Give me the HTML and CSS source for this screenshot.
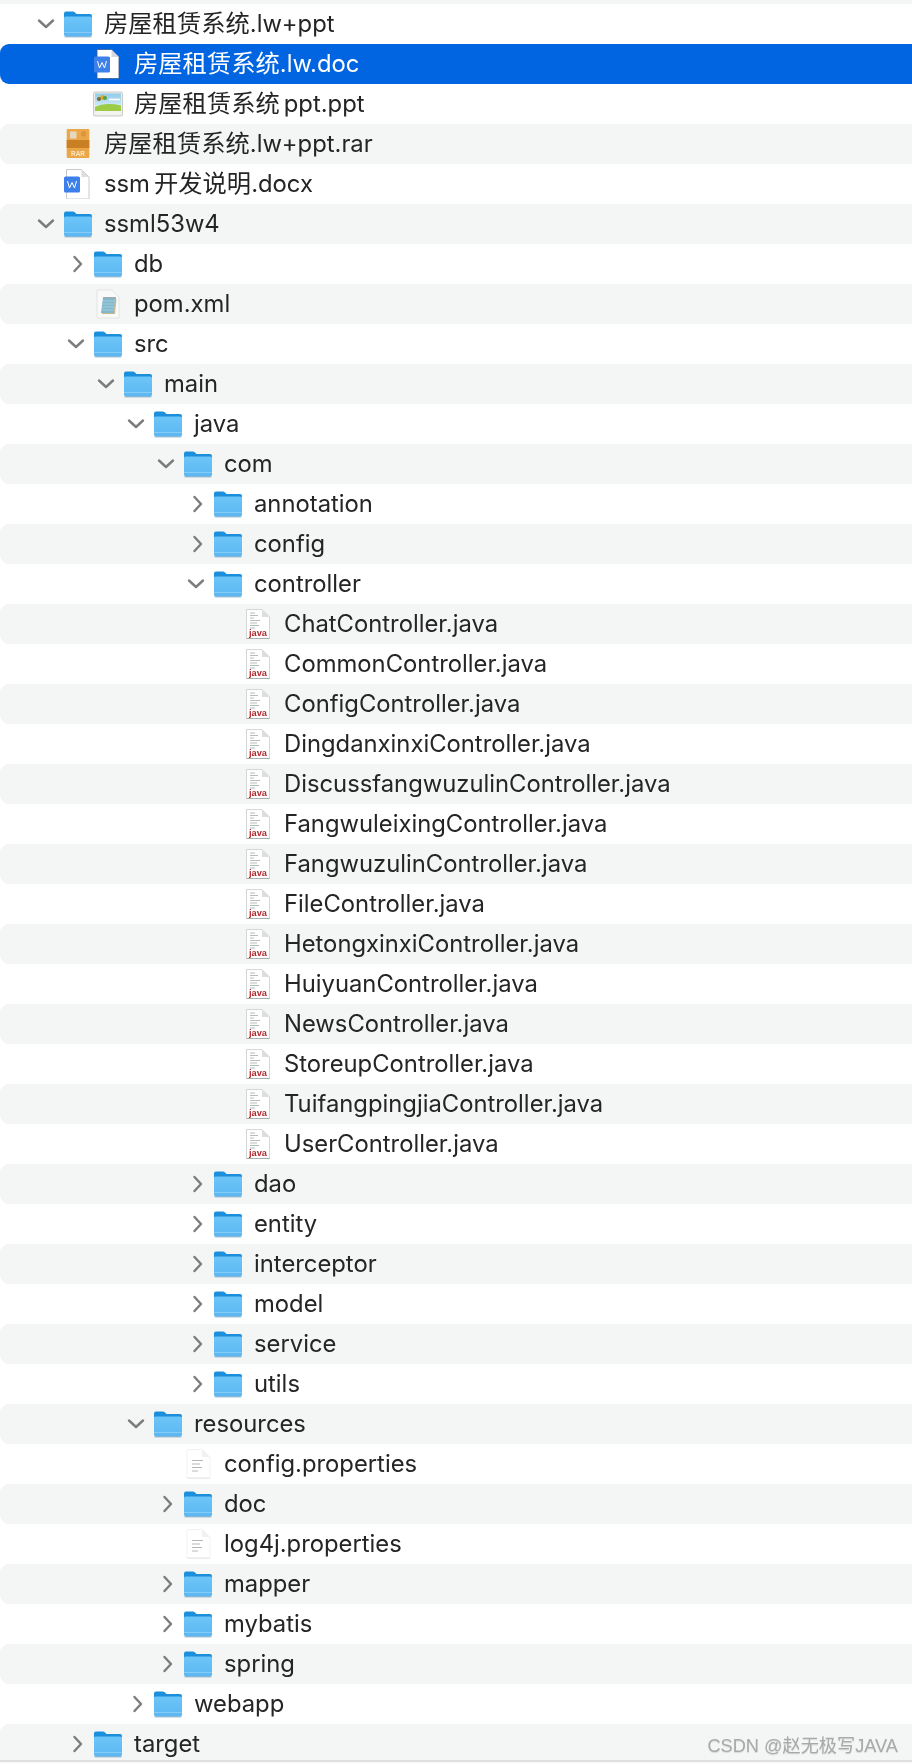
FILE: index.html
```html
<!DOCTYPE html>
<html lang="zh">
<head>
<meta charset="utf-8">
<title>Finder</title>
<link rel="stylesheet" href="styles.css">
</head>
<body>
<svg class="defs" width="0" height="0" aria-hidden="true">
  <defs>
    <linearGradient id="fg" x1="0" y1="0" x2="0" y2="1"><stop offset="0" stop-color="#6cc6f8"/><stop offset="1" stop-color="#5cb6f2"/></linearGradient>
    <linearGradient id="sky" x1="0" y1="0" x2="0" y2="1"><stop offset="0" stop-color="#8fcbe8"/><stop offset="1" stop-color="#d8eff7"/></linearGradient>
    <symbol id="folder" viewBox="0 0 30 30">
      <path d="M1 8V4.5Q1 2.5 3 2.5H10Q11.5 2.5 12.5 4L13.5 5H27Q29 5 29 7V12H1Z" fill="#1b8fdc"/>
      <path d="M1 9Q1 7.5 2.5 7.5H27.5Q29 7.5 29 9V25.5Q29 27.5 27 27.5H3Q1 27.5 1 25.5Z" fill="url(#fg)"/>
      <path d="M1 23.5H29" stroke="#8fd2f8" stroke-width=".8"/>
      <path d="M1.5 27.9H28.5" stroke="#2f6f9c" stroke-opacity=".55" stroke-width=".9"/>
    </symbol>
    <symbol id="word" viewBox="0 0 30 30">
      <path d="M3.5 .5H18.5L26 8V29Q26 30 25 30H4.5Q3.5 30 3.5 29Z" fill="#fff" stroke="#b9bcc0" stroke-width=".8"/>
      <path d="M18.5 .5V8H26Z" fill="#dcdee0"/>
      <rect x="1" y="7.5" width="16" height="16" rx="1.6" fill="#3d80ea"/>
      <path d="M4.5 12L6.5 19L9 13.5L11.5 19L13.5 12" fill="none" stroke="#fff" stroke-width="1"/>
    </symbol>
    <symbol id="word-sel" viewBox="0 0 30 30">
      <path d="M4 .5H18.5L26 8V28.5Q26 29.5 25 29.5H5Q4 29.5 4 28.5Z" fill="#fff" stroke="#3a5c8c" stroke-width=".8"/>
      <path d="M18.5 .5V8H26Z" fill="#d5d9df"/>
      <rect x="1" y="7.5" width="16" height="16" rx="1.6" fill="#3d80ea"/>
      <path d="M4.5 12L6.5 19L9 13.5L11.5 19L13.5 12" fill="none" stroke="#fff" stroke-width="1"/>
    </symbol>
    <symbol id="picture" viewBox="0 0 30 30">
      <rect x="0.5" y="3" width="29" height="24" rx="1.5" fill="#eceee9" stroke="#b5b8b6" stroke-width=".7"/>
      <rect x="2" y="4.5" width="26" height="14" fill="url(#sky)"/>
      <path d="M2 18Q12 13 28 16.5V22H2Z" fill="#9ccb45"/>
      <rect x="2" y="22" width="26" height="3.5" fill="#f3f4f0"/>
      <circle cx="9.5" cy="8.5" r="2.4" fill="#e0a92a"/>
      <circle cx="6" cy="10" r="2.1" fill="#7a6a33"/>
      <circle cx="12" cy="9" r="2" fill="#4fa04a"/>
      <path d="M16 10.5H27" stroke="#fff" stroke-width="1.6"/>
    </symbol>
    <symbol id="rar" viewBox="0 0 30 30">
      <rect x="3.7" y="0" width="22.6" height="29" rx="1" fill="#eba648"/>
      <rect x="3.7" y="11" width="22.6" height="8" fill="#c97f24"/>
      <rect x="7" y="2.5" width="6.5" height="7" fill="#e6d8c0"/>
      <circle cx="20.5" cy="5" r="2" fill="#dd9a3e" stroke="#c98730" stroke-width=".7"/>
      <text x="15" y="26.5" class="rar-label">RAR</text>
    </symbol>
    <symbol id="xml" viewBox="0 0 30 30">
      <path d="M4 1H19L26 8V29H4Z" fill="#f9f9f9" stroke="#dcdddf" stroke-width=".7"/>
      <path d="M10 9H23L21 24H8Z" fill="#82b8cc"/>
      <path d="M21.8 10H23.5L22 25H9V24H21Z" fill="#c8b88a"/>
      <path d="M10 12H22M9.7 15H21.7M9.3 18H21.3M9 21H21" stroke="#b3d4e0" stroke-width=".7"/>
      <path d="M10.5 8.5H23" stroke="#555" stroke-width="1" stroke-dasharray="1 1"/>
    </symbol>
    <symbol id="java" viewBox="0 0 30 30">
      <path d="M3.5 .5H19L26.5 8V29.5H3.5Z" fill="#fff" stroke="#c2c4c6" stroke-width=".7"/>
      <path d="M19 .5V8H26.5Z" fill="#dcdee0"/>
      <path d="M3.5 29.7H26.5" stroke="#9a9c9e" stroke-width=".9"/>
      <path d="M7 4H12M7 6.5H15M7 9H11M7 11.5H17M7 14H14M7 16.5H16M7 19H12" stroke="#b0b3b6" stroke-width=".9"/>
      <text x="15" y="27.2" class="java-label">java</text>
    </symbol>
    <symbol id="text" viewBox="0 0 30 30">
      <path d="M4 .5H19L27 8V29H4Z" fill="#fff" stroke="#eceded" stroke-width=".7"/>
      <path d="M19 .5V8H27Z" fill="#f0f1f1"/>
      <path d="M4 29.2H27" stroke="#dcdddd" stroke-width=".7"/>
      <path d="M9 11.5H20M9 15H17M9 18.5H19M9 22H15" stroke="#b5b7b9" stroke-width="1.1"/>
    </symbol>
    <symbol id="open" viewBox="0 0 20 20"><path d="M3 6.5L10 13L17 6.5" fill="none" stroke="#7b7c7d" stroke-width="2.4" stroke-linecap="round" stroke-linejoin="round"/></symbol>
    <symbol id="closed" viewBox="0 0 20 20"><path d="M8.5 3L15 10L8.5 17" fill="none" stroke="#7b7c7d" stroke-width="2.4" stroke-linecap="round" stroke-linejoin="round"/></symbol>
  </defs>
</svg>
<main class="list">
  <div class="stripe-top"></div>
  <div class="row d1"><svg class="chev"><use href="#open"/></svg><svg class="ico"><use href="#folder"/></svg><span class="name"><span class="cjk">房屋租赁系统</span>.lw+ppt</span></div>
  <div class="row d2 sel"><span class="chev"></span><svg class="ico"><use href="#word-sel"/></svg><span class="name"><span class="cjk">房屋租赁系统</span>.lw.doc</span></div>
  <div class="row d2"><span class="chev"></span><svg class="ico"><use href="#picture"/></svg><span class="name"><span class="cjk gap-after">房屋租赁系统</span>ppt.ppt</span></div>
  <div class="row d1 alt"><span class="chev"></span><svg class="ico"><use href="#rar"/></svg><span class="name"><span class="cjk">房屋租赁系统</span>.lw+ppt.rar</span></div>
  <div class="row d1"><span class="chev"></span><svg class="ico"><use href="#word"/></svg><span class="name">ssm<span class="cjk gap-before">开发说明</span>.docx</span></div>
  <div class="row d1 alt"><svg class="chev"><use href="#open"/></svg><svg class="ico"><use href="#folder"/></svg><span class="name">ssml53w4</span></div>
  <div class="row d2"><svg class="chev"><use href="#closed"/></svg><svg class="ico"><use href="#folder"/></svg><span class="name">db</span></div>
  <div class="row d2 alt"><span class="chev"></span><svg class="ico"><use href="#xml"/></svg><span class="name">pom.xml</span></div>
  <div class="row d2"><svg class="chev"><use href="#open"/></svg><svg class="ico"><use href="#folder"/></svg><span class="name">src</span></div>
  <div class="row d3 alt"><svg class="chev"><use href="#open"/></svg><svg class="ico"><use href="#folder"/></svg><span class="name">main</span></div>
  <div class="row d4"><svg class="chev"><use href="#open"/></svg><svg class="ico"><use href="#folder"/></svg><span class="name">java</span></div>
  <div class="row d5 alt"><svg class="chev"><use href="#open"/></svg><svg class="ico"><use href="#folder"/></svg><span class="name">com</span></div>
  <div class="row d6"><svg class="chev"><use href="#closed"/></svg><svg class="ico"><use href="#folder"/></svg><span class="name">annotation</span></div>
  <div class="row d6 alt"><svg class="chev"><use href="#closed"/></svg><svg class="ico"><use href="#folder"/></svg><span class="name">config</span></div>
  <div class="row d6"><svg class="chev"><use href="#open"/></svg><svg class="ico"><use href="#folder"/></svg><span class="name">controller</span></div>
  <div class="row d7 alt"><span class="chev"></span><svg class="ico"><use href="#java"/></svg><span class="name">ChatController.java</span></div>
  <div class="row d7"><span class="chev"></span><svg class="ico"><use href="#java"/></svg><span class="name">CommonController.java</span></div>
  <div class="row d7 alt"><span class="chev"></span><svg class="ico"><use href="#java"/></svg><span class="name">ConfigController.java</span></div>
  <div class="row d7"><span class="chev"></span><svg class="ico"><use href="#java"/></svg><span class="name">DingdanxinxiController.java</span></div>
  <div class="row d7 alt"><span class="chev"></span><svg class="ico"><use href="#java"/></svg><span class="name">DiscussfangwuzulinController.java</span></div>
  <div class="row d7"><span class="chev"></span><svg class="ico"><use href="#java"/></svg><span class="name">FangwuleixingController.java</span></div>
  <div class="row d7 alt"><span class="chev"></span><svg class="ico"><use href="#java"/></svg><span class="name">FangwuzulinController.java</span></div>
  <div class="row d7"><span class="chev"></span><svg class="ico"><use href="#java"/></svg><span class="name">FileController.java</span></div>
  <div class="row d7 alt"><span class="chev"></span><svg class="ico"><use href="#java"/></svg><span class="name">HetongxinxiController.java</span></div>
  <div class="row d7"><span class="chev"></span><svg class="ico"><use href="#java"/></svg><span class="name">HuiyuanController.java</span></div>
  <div class="row d7 alt"><span class="chev"></span><svg class="ico"><use href="#java"/></svg><span class="name">NewsController.java</span></div>
  <div class="row d7"><span class="chev"></span><svg class="ico"><use href="#java"/></svg><span class="name">StoreupController.java</span></div>
  <div class="row d7 alt"><span class="chev"></span><svg class="ico"><use href="#java"/></svg><span class="name">TuifangpingjiaController.java</span></div>
  <div class="row d7"><span class="chev"></span><svg class="ico"><use href="#java"/></svg><span class="name">UserController.java</span></div>
  <div class="row d6 alt"><svg class="chev"><use href="#closed"/></svg><svg class="ico"><use href="#folder"/></svg><span class="name">dao</span></div>
  <div class="row d6"><svg class="chev"><use href="#closed"/></svg><svg class="ico"><use href="#folder"/></svg><span class="name">entity</span></div>
  <div class="row d6 alt"><svg class="chev"><use href="#closed"/></svg><svg class="ico"><use href="#folder"/></svg><span class="name">interceptor</span></div>
  <div class="row d6"><svg class="chev"><use href="#closed"/></svg><svg class="ico"><use href="#folder"/></svg><span class="name">model</span></div>
  <div class="row d6 alt"><svg class="chev"><use href="#closed"/></svg><svg class="ico"><use href="#folder"/></svg><span class="name">service</span></div>
  <div class="row d6"><svg class="chev"><use href="#closed"/></svg><svg class="ico"><use href="#folder"/></svg><span class="name">utils</span></div>
  <div class="row d4 alt"><svg class="chev"><use href="#open"/></svg><svg class="ico"><use href="#folder"/></svg><span class="name">resources</span></div>
  <div class="row d5"><span class="chev"></span><svg class="ico"><use href="#text"/></svg><span class="name">config.properties</span></div>
  <div class="row d5 alt"><svg class="chev"><use href="#closed"/></svg><svg class="ico"><use href="#folder"/></svg><span class="name">doc</span></div>
  <div class="row d5"><span class="chev"></span><svg class="ico"><use href="#text"/></svg><span class="name">log4j.properties</span></div>
  <div class="row d5 alt"><svg class="chev"><use href="#closed"/></svg><svg class="ico"><use href="#folder"/></svg><span class="name">mapper</span></div>
  <div class="row d5"><svg class="chev"><use href="#closed"/></svg><svg class="ico"><use href="#folder"/></svg><span class="name">mybatis</span></div>
  <div class="row d5 alt"><svg class="chev"><use href="#closed"/></svg><svg class="ico"><use href="#folder"/></svg><span class="name">spring</span></div>
  <div class="row d4"><svg class="chev"><use href="#closed"/></svg><svg class="ico"><use href="#folder"/></svg><span class="name">webapp</span></div>
  <div class="row d2 alt last"><svg class="chev"><use href="#closed"/></svg><svg class="ico"><use href="#folder"/></svg><span class="name">target</span><span class="mark">CSDN @赵无极写JAVA</span></div>
  <div class="rule"></div>
</main>
</body>
</html>
```
FILE: styles.css
```css
* { box-sizing: border-box; }
html, body { margin: 0; padding: 0; background: #fff; }
body { width: 912px; height: 1764px; overflow: hidden; font-family: Inter, "Noto Sans CJK SC", sans-serif; }
.defs { display: block; height: 0; }
.list { display: flex; flex-direction: column; }
.stripe-top { height: 4px; background: #f4f5f5; }
.row { display: flex; align-items: center; height: 40px; font-size: 23.8px; color: #252525; }
.row.alt { background: #f4f5f5; border-radius: 9px 0 0 9px; }
.row.sel { background: #0164e1; border-radius: 9px 0 0 9px; color: #fff; }
.row.last { height: 36px; padding-top: 4px; position: relative; border-radius: 9px 0 0 0; }
.rule { height: 4px; background: #fafafa; border-top: 2px solid #dedfdf; }
.d1 { padding-left: 36px; }
.d2 { padding-left: 66px; }
.d3 { padding-left: 96px; }
.d4 { padding-left: 126px; }
.d5 { padding-left: 156px; }
.d6 { padding-left: 186px; }
.d7 { padding-left: 216px; }
.chev { width: 20px; height: 20px; flex: none; margin-right: 7px; }
.ico { width: 30px; height: 30px; flex: none; margin-right: 11px; filter: blur(.3px); }
.name { white-space: nowrap; line-height: 30px; filter: blur(.3px); }
.cjk { font-size: 24.3px; line-height: 1; }
.gap-after { margin-right: 4px; }
.gap-before { margin-left: 4px; }
.mark { position: absolute; right: 14px; top: 9px; font-size: 18.2px; line-height: 26px; color: #a9a9a9; text-shadow: 0 1px 1px rgba(0,0,0,.12); font-family: "Liberation Sans", "Noto Sans CJK SC", sans-serif; filter: blur(.3px); }
.rar-label { font: 700 6.5px "Liberation Sans", sans-serif; fill: #fbe6c6; text-anchor: middle; }
.java-label { font: 700 9.2px "Liberation Sans", sans-serif; fill: #b3262a; text-anchor: middle; }
```
